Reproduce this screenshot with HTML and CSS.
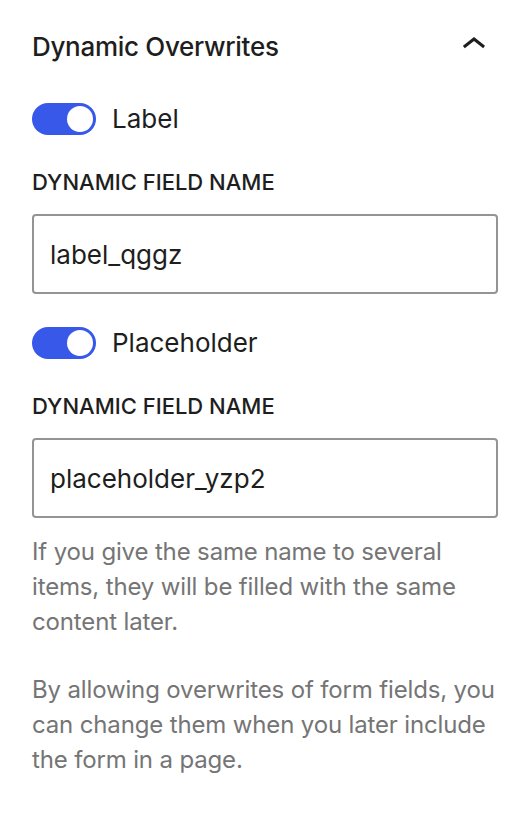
FILE: index.html
```html
<!DOCTYPE html>
<html lang="en">
<head>
<meta charset="utf-8">
<title>Dynamic Overwrites</title>
<link rel="stylesheet" href="styles.css">
</head>
<body>
<section class="panel">
  <header class="panel-header">
    <h2 class="panel-title">Dynamic Overwrites</h2>
    <svg class="chevron" viewBox="0 0 24 24" width="48" height="48" aria-hidden="true">
      <path d="M6.5 12.4L12 8l5.5 4.4-.9 1.2L12 10l-4.6 3.6-1-1.2z" fill="#1e1e1e"/>
    </svg>
  </header>

  <div class="toggle-row first">
    <span class="toggle"><span class="knob"></span></span>
    <span class="toggle-label">Label</span>
  </div>
  <div class="field-label">Dynamic field name</div>
  <div class="input">label_qggz</div>

  <div class="toggle-row">
    <span class="toggle"><span class="knob"></span></span>
    <span class="toggle-label">Placeholder</span>
  </div>
  <div class="field-label">Dynamic field name</div>
  <div class="input">placeholder_yzp2</div>

  <p class="help first-help">If you give the same name to several items, they will be filled with the same content later.</p>
  <p class="help">By allowing overwrites of form fields, you can change them when you later include the form in a page.</p>
</section>
</body>
</html>
```

FILE: styles.css
```css
html, body {
  margin: 0;
  padding: 0;
  background: #ffffff;
}

body {
  font-family: Inter, "Noto Sans", "Liberation Sans", sans-serif;
  color: #1e1e1e;
}

.panel {
  padding: 0 32px;
}

.panel-header {
  height: 93px;
  display: flex;
  align-items: center;
  justify-content: space-between;
}

.panel-title {
  margin: 0;
  font-size: 26px;
  font-weight: 500;
  line-height: 32px;
  letter-spacing: -0.3px;
}

.chevron {
  display: block;
  margin-top: -3px;
}

.toggle-row {
  display: flex;
  align-items: center;
  gap: 16px;
  margin-top: 33px;
  height: 32px;
}

.toggle-row.first {
  margin-top: 10px;
}

.toggle {
  position: relative;
  width: 64px;
  height: 32px;
  border-radius: 16px;
  background: #3858e9;
  flex: none;
}

.knob {
  position: absolute;
  top: 3px;
  left: 35px;
  width: 26px;
  height: 26px;
  border-radius: 50%;
  background: #ffffff;
}

.toggle-label {
  font-size: 26px;
  line-height: 32px;
}

.field-label {
  margin-top: 31px;
  font-size: 22px;
  font-weight: 500;
  line-height: 32px;
  text-transform: uppercase;
}

.input {
  margin-top: 16px;
  box-sizing: border-box;
  height: 80px;
  border: 2px solid #949494;
  border-radius: 4px;
  padding: 0 16px;
  display: flex;
  align-items: center;
  font-size: 26px;
}

.help {
  margin: 33px 0 0;
  font-size: 24px;
  line-height: 35px;
  letter-spacing: -0.15px;
  color: #757575;
}

.help.first-help {
  margin-top: 16px;
}
```
